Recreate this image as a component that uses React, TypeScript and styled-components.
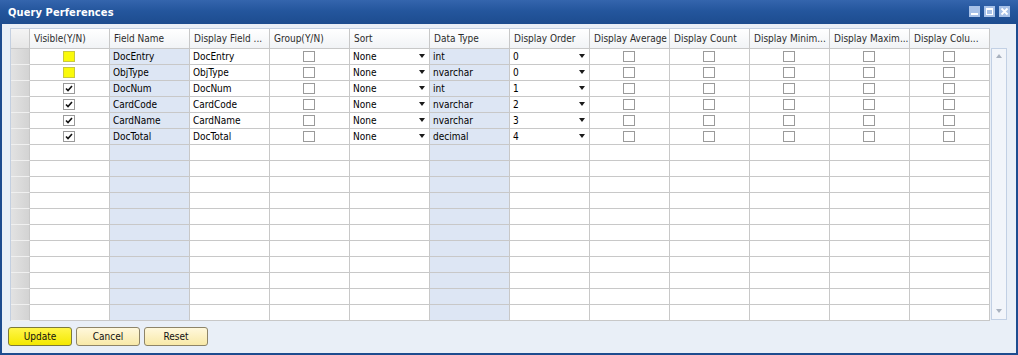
import React from 'react';
import styled, { createGlobalStyle } from 'styled-components';

const GlobalStyle = createGlobalStyle`
  html, body {
    margin: 0;
    padding: 0;
    background: #ffffff;
  }
  body {
    font-family: 'DejaVu Sans Condensed', 'DejaVu Sans', 'Liberation Sans', sans-serif;
    font-stretch: condensed;
    font-size: 10px;
    color: #000;
  }
`;

const columns = [
  'Visible(Y/N)',
  'Field Name',
  'Display Field ...',
  'Group(Y/N)',
  'Sort',
  'Data Type',
  'Display Order',
  'Display Average',
  'Display Count',
  'Display Minim...',
  'Display Maxim...',
  'Display Colu...',
];

type FieldRow = {
  visible: 'yellow' | 'checked';
  field: string;
  type: string;
  order: string;
};

const fieldRows: FieldRow[] = [
  { visible: 'yellow', field: 'DocEntry', type: 'int', order: '0' },
  { visible: 'yellow', field: 'ObjType', type: 'nvarchar', order: '0' },
  { visible: 'checked', field: 'DocNum', type: 'int', order: '1' },
  { visible: 'checked', field: 'CardCode', type: 'nvarchar', order: '2' },
  { visible: 'checked', field: 'CardName', type: 'nvarchar', order: '3' },
  { visible: 'checked', field: 'DocTotal', type: 'decimal', order: '4' },
];

const TOTAL_ROWS = 17;
const BLUE_COLS = [1, 5];

const Window = styled.div`
  width: 1018px;
  height: 355px;
  box-sizing: border-box;
  display: flex;
  flex-direction: column;
  background: #1d4c8f;
`;

const TitleBar = styled.div`
  height: 24px;
  flex: none;
  display: flex;
  align-items: center;
  justify-content: space-between;
  padding: 0 8px 0 8px;
  background: linear-gradient(#3465ad 0%, #24569d 45%, #1d4c8f 100%);
`;

const Title = styled.span`
  color: #fff;
  font-weight: bold;
  font-size: 11px;
  letter-spacing: 0.1px;
`;

const Controls = styled.div`
  display: flex;
  gap: 4px;
  margin-top: -2px;
`;

const CtrlBtn = styled.div`
  width: 11px;
  height: 11px;
  background: #a7c1e8;
  display: flex;
  align-items: center;
  justify-content: center;
`;

const Body = styled.div`
  flex: 1;
  margin: 0 2px 2px 2px;
  background: #e9eff7;
  padding: 4px 8px 0 8px;
  display: flex;
  flex-direction: column;
`;

const GridArea = styled.div`
  display: flex;
  align-items: flex-start;
`;

const Table = styled.div`
  border-top: 1px solid #c3cfe0;
  border-left: 1px solid #c3cfe0;
  background: #fff;
`;

const Row = styled.div<{ $header?: boolean }>`
  display: grid;
  grid-template-columns: 19px repeat(12, 80px);
  height: ${({ $header }) => ($header ? '20px' : '16px')};
`;

const HeadCell = styled.div`
  box-sizing: border-box;
  border-right: 1px solid #c8c8c8;
  border-bottom: 1px solid #c8c8c8;
  background: linear-gradient(#ffffff, #f1f3f6);
  color: #2b2b2b;
  padding-left: 4px;
  display: flex;
  align-items: center;
  white-space: nowrap;
  overflow: hidden;
`;

const Corner = styled.div`
  box-sizing: border-box;
  border-right: 1px solid #c8c8c8;
  border-bottom: 1px solid #c8c8c8;
  background: linear-gradient(#f4f4f4, #e6e6e6);
`;

const RowHead = styled.div`
  box-sizing: border-box;
  border-right: 1px solid #c8c8c8;
  border-bottom: 1px solid #f0f0f0;
  background: linear-gradient(90deg, #e2e2e2, #d3d3d3);
`;

const Cell = styled.div<{ $blue?: boolean; $center?: boolean }>`
  box-sizing: border-box;
  border-right: 1px solid #c8c8c8;
  border-bottom: 1px solid #c8c8c8;
  background: ${({ $blue }) => ($blue ? '#dde6f4' : '#ffffff')};
  display: flex;
  align-items: center;
  justify-content: ${({ $center }) => ($center ? 'center' : 'space-between')};
  padding: ${({ $center }) => ($center ? '0' : '0 4px 0 3px')};
  white-space: nowrap;
  overflow: hidden;
`;

const Box = styled.span<{ $yellow?: boolean }>`
  box-sizing: border-box;
  width: 12px;
  height: 11px;
  border: 1px solid ${({ $yellow }) => ($yellow ? '#c9c83c' : '#9a9a9a')};
  background: ${({ $yellow }) => ($yellow ? '#fafa0a' : '#ffffff')};
  display: flex;
  align-items: center;
  justify-content: center;
  margin-left: -1px;
`;

const Arrow = styled.span`
  width: 0;
  height: 0;
  border-left: 3.5px solid transparent;
  border-right: 3.5px solid transparent;
  border-top: 4px solid #1a1a1a;
  margin-top: -2px;
`;

const ScrollBar = styled.div`
  margin-left: 1px;
  margin-top: 20px;
  width: 16px;
  height: 272px;
  box-sizing: border-box;
  border: 1px solid #c2d0e4;
  background: #f2f5fa;
  display: flex;
  flex-direction: column;
  justify-content: space-between;
  align-items: center;
  padding: 5px 0 6px;
`;

const ScrollArrow = styled.span<{ $up?: boolean }>`
  width: 0;
  height: 0;
  border-left: 3.5px solid transparent;
  border-right: 3.5px solid transparent;
  ${({ $up }) => ($up ? 'border-bottom: 4px solid #a9b2bf;' : 'border-top: 4px solid #a9b2bf;')}
`;

const Buttons = styled.div`
  display: flex;
  gap: 4px;
  margin-top: 6px;
  margin-left: -2px;
`;

const Button = styled.button<{ $primary?: boolean }>`
  width: 64px;
  height: 19px;
  box-sizing: border-box;
  border-radius: 3px;
  border: 1px solid ${({ $primary }) => ($primary ? '#7c7a3a' : '#8d8468')};
  background: ${({ $primary }) =>
    $primary
      ? 'linear-gradient(#fff64a, #f4e800)'
      : 'linear-gradient(#fff8dc, #f8e9a8)'};
  font-family: inherit;
  font-stretch: condensed;
  font-size: 10px;
  color: #111;
  padding: 0;
`;

const Check = () => (
  <svg width="8" height="7" viewBox="0 0 8 7">
    <polyline points="1,3.5 3,5.5 7,1" fill="none" stroke="#111" strokeWidth="1.6" />
  </svg>
);

const Checkbox = ({ kind }: { kind: 'yellow' | 'checked' | 'empty' }) => (
  <Box $yellow={kind === 'yellow'}>{kind === 'checked' && <Check />}</Box>
);

const WinControls = () => (
  <Controls>
    <CtrlBtn>
      <svg width="11" height="11" viewBox="0 0 11 11">
        <rect x="2" y="7" width="7" height="2" fill="#fff" />
      </svg>
    </CtrlBtn>
    <CtrlBtn>
      <svg width="11" height="11" viewBox="0 0 11 11">
        <rect x="2.5" y="2.5" width="6" height="6" fill="none" stroke="#fff" />
        <rect x="2" y="2" width="7" height="2" fill="#fff" />
      </svg>
    </CtrlBtn>
    <CtrlBtn>
      <svg width="11" height="11" viewBox="0 0 11 11">
        <path d="M2.5 2.5 L8.5 8.5 M8.5 2.5 L2.5 8.5" stroke="#fff" strokeWidth="1.8" />
      </svg>
    </CtrlBtn>
  </Controls>
);

const DataRow = ({ row }: { row: FieldRow }) => (
  <Row>
    <RowHead />
    <Cell $center>
      <Checkbox kind={row.visible} />
    </Cell>
    <Cell $blue>{row.field}</Cell>
    <Cell>{row.field}</Cell>
    <Cell $center>
      <Checkbox kind="empty" />
    </Cell>
    <Cell>
      None
      <Arrow />
    </Cell>
    <Cell $blue>{row.type}</Cell>
    <Cell>
      {row.order}
      <Arrow />
    </Cell>
    {[0, 1, 2, 3, 4].map((i) => (
      <Cell $center key={i}>
        <Checkbox kind="empty" />
      </Cell>
    ))}
  </Row>
);

const EmptyRow = () => (
  <Row>
    <RowHead />
    {columns.map((_, i) => (
      <Cell key={i} $blue={BLUE_COLS.includes(i)} />
    ))}
  </Row>
);

const App = () => {
  const empties = Array.from({ length: TOTAL_ROWS - fieldRows.length });
  return (
    <>
      <GlobalStyle />
      <Window>
        <TitleBar>
          <Title>Query Perferences</Title>
          <WinControls />
        </TitleBar>
        <Body>
          <GridArea>
            <Table>
              <Row $header>
                <Corner />
                {columns.map((c) => (
                  <HeadCell key={c}>{c}</HeadCell>
                ))}
              </Row>
              {fieldRows.map((r) => (
                <DataRow key={r.field} row={r} />
              ))}
              {empties.map((_, i) => (
                <EmptyRow key={i} />
              ))}
            </Table>
            <ScrollBar>
              <ScrollArrow $up />
              <ScrollArrow />
            </ScrollBar>
          </GridArea>
          <Buttons>
            <Button $primary>Update</Button>
            <Button>Cancel</Button>
            <Button>Reset</Button>
          </Buttons>
        </Body>
      </Window>
    </>
  );
};

export default App;
